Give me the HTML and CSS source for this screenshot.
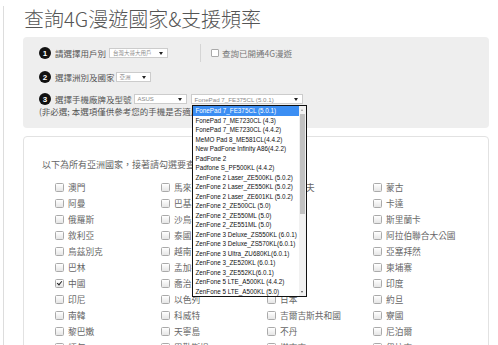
FILE: index.html
```html
<!DOCTYPE html>
<html lang="zh-Hant">
<head>
    <meta charset="UTF-8">
    <title>查詢4G漫遊國家&amp;支援頻率</title>
    <link rel="stylesheet" href="styles.css">
</head>
<body>
<div class="page">
    <h1>查詢4G漫遊國家&amp;支援頻率</h1>

    <div class="filters">
        <div class="row">
            <span class="num">1</span>
            <span class="label">請選擇用戶別</span>
            <span class="select sel-user">台灣大哥大用戶<i class="caret"></i></span>
            <span class="divider"></span>
            <span class="box"></span>
            <span class="label light">查詢已開通4G漫遊</span>
        </div>
        <div class="row row-2">
            <span class="num">2</span>
            <span class="label">選擇洲別及國家</span>
            <span class="select sel-area">亞洲<i class="caret"></i></span>
        </div>
        <div class="row row-3">
            <span class="num">3</span>
            <span class="label">選擇手機廠牌及型號</span>
            <span class="select sel-brand">ASUS<i class="caret"></i></span>
            <span class="select sel-model">FonePad 7_FE375CL (5.0.1)<i class="caret"></i>
                <!-- open dropdown of the model select -->
                <span class="options">
                    <span class="opt-list">
                        <span class="opt selected">FonePad 7_FE375CL (5.0.1)</span>
                        <span class="opt">FonePad 7_ME7230CL (4.3)</span>
                        <span class="opt">FonePad 7_ME7230CL (4.4.2)</span>
                        <span class="opt">MeMO Pad 8_ME581CL(4.4.2)</span>
                        <span class="opt">New PadFone Infinity A86(4.2.2)</span>
                        <span class="opt">PadFone 2</span>
                        <span class="opt">Padfone S_PF500KL (4.4.2)</span>
                        <span class="opt">ZenFone 2 Laser_ZE500KL (5.0.2)</span>
                        <span class="opt">ZenFone 2 Laser_ZE550KL (5.0.2)</span>
                        <span class="opt">ZenFone 2 Laser_ZE601KL (5.0.2)</span>
                        <span class="opt">ZenFone 2_ZE500CL (5.0)</span>
                        <span class="opt">ZenFone 2_ZE550ML (5.0)</span>
                        <span class="opt">ZenFone 2_ZE551ML (5.0)</span>
                        <span class="opt">ZenFone 3 Deluxe_ZS550KL (6.0.1)</span>
                        <span class="opt">ZenFone 3 Deluxe_ZS570KL(6.0.1)</span>
                        <span class="opt">ZenFone 3 Ultra_ZU680KL(6.0.1)</span>
                        <span class="opt">ZenFone 3_ZE520KL (6.0.1)</span>
                        <span class="opt">ZenFone 3_ZE552KL(6.0.1)</span>
                        <span class="opt">ZenFone 5 LTE_A500KL (4.4.2)</span>
                        <span class="opt">ZenFone 5 LTE_A500KL (5.0)</span>
                    </span>
                    <span class="scroll">
                        <span class="arrow up"></span>
                        <span class="thumb"></span>
                        <span class="arrow down"></span>
                    </span>
                </span>
            </span>
        </div>
        <div class="note">(非必選; 本選項僅供參考您的手機是否適用當地4G頻段)</div>
    </div>

    <div class="results">
        <p class="intro">以下為所有亞洲國家，接著請勾選要查詢的國家</p>
        <div class="countries">
            <label class="item"><span class="check"></span>澳門</label>
            <label class="item"><span class="check"></span>阿曼</label>
            <label class="item"><span class="check"></span>俄羅斯</label>
            <label class="item"><span class="check"></span>敘利亞</label>
            <label class="item"><span class="check"></span>烏茲別克</label>
            <label class="item"><span class="check"></span>巴林</label>
            <label class="item"><span class="check on"></span>中國</label>
            <label class="item"><span class="check"></span>印尼</label>
            <label class="item"><span class="check"></span>南韓</label>
            <label class="item"><span class="check"></span>黎巴嫩</label>
            <label class="item"><span class="check"></span>緬甸</label>

            <label class="item"><span class="check"></span>馬來西亞</label>
            <label class="item"><span class="check"></span>巴基斯坦</label>
            <label class="item"><span class="check"></span>沙烏地阿拉伯</label>
            <label class="item"><span class="check"></span>泰國</label>
            <label class="item"><span class="check"></span>越南</label>
            <label class="item"><span class="check"></span>孟加拉</label>
            <label class="item"><span class="check"></span>喬治亞</label>
            <label class="item"><span class="check"></span>以色列</label>
            <label class="item"><span class="check"></span>科威特</label>
            <label class="item"><span class="check"></span>天寧島</label>
            <label class="item"><span class="check"></span>巴勒斯坦</label>

            <label class="item"><span class="check"></span>馬爾地夫</label>
            <label class="item"><span class="check"></span>新加坡</label>
            <label class="item"><span class="check"></span>菲律賓</label>
            <label class="item"><span class="check"></span>土耳其</label>
            <label class="item"><span class="check"></span>哈薩克</label>
            <label class="item"><span class="check"></span>汶萊</label>
            <label class="item"><span class="check"></span>香港</label>
            <label class="item"><span class="check"></span>日本</label>
            <label class="item"><span class="check"></span>吉爾吉斯共和國</label>
            <label class="item"><span class="check"></span>不丹</label>
            <label class="item"><span class="check"></span>塔吉克</label>

            <label class="item"><span class="check"></span>蒙古</label>
            <label class="item"><span class="check"></span>卡達</label>
            <label class="item"><span class="check"></span>斯里蘭卡</label>
            <label class="item"><span class="check"></span>阿拉伯聯合大公國</label>
            <label class="item"><span class="check"></span>亞塞拜然</label>
            <label class="item"><span class="check"></span>柬埔寨</label>
            <label class="item"><span class="check"></span>印度</label>
            <label class="item"><span class="check"></span>約旦</label>
            <label class="item"><span class="check"></span>寮國</label>
            <label class="item"><span class="check"></span>尼泊爾</label>
            <label class="item"><span class="check"></span>伊拉克</label>
        </div>
    </div>
</div>
</body>
</html>
```

FILE: styles.css
```css
html, body {
    overflow: hidden;
}

body {
    margin: 0;
    background-color: #fff;
    font-family: "Liberation Sans", "Noto Sans CJK TC", sans-serif;
    color: #555;
}

.page {
    margin-left: 3px;
    border-left: 1px solid #ddd;
    min-height: 400px;
}

h1 {
    margin: 6px 0 5px 20px;
    font-family: "Noto Sans CJK TC", sans-serif;
    font-size: 20px;
    line-height: 26px;
    font-weight: 300;
    color: #555;
}

/* top filter panel */
.filters {
    margin-left: 19px;
    width: 466px;
    box-sizing: border-box;
    padding: 10px 16px 11px;
    background-color: #eee;
    border-radius: 4px;
}

.row {
    display: flex;
    align-items: center;
    height: 12px;
}

.row-2 {
    margin-top: 12px;
}

.row-3 {
    margin-top: 10px;
}

.num {
    display: flex;
    align-items: center;
    justify-content: center;
    width: 12px;
    height: 12px;
    margin-right: 4px;
    border-radius: 50%;
    background-color: #111;
    color: #fff;
    font-size: 8px;
    font-weight: bold;
}

.label {
    font-family: "Noto Sans CJK TC", sans-serif;
    font-size: 8.5px;
    line-height: 12px;
    color: #555;
    white-space: nowrap;
}

.label.light {
    color: #777;
}

.select {
    display: flex;
    align-items: center;
    justify-content: space-between;
    height: 10px;
    box-sizing: border-box;
    margin-left: 3px;
    padding: 0 4px 0 3px;
    border: 1px solid #ccc;
    background-color: #fff;
    font-size: 5.5px;
    color: #888;
    white-space: nowrap;
}

.caret {
    width: 0;
    height: 0;
    border-left: 2.5px solid transparent;
    border-right: 2.5px solid transparent;
    border-top: 3.5px solid #222;
}

.sel-user {
    width: 59px;
}

.sel-area {
    width: 35px;
    margin-left: 1px;
}

.sel-brand {
    width: 53px;
    margin-left: 2px;
    font-size: 6px;
}

.sel-model {
    position: relative;
    width: 112px;
    margin-left: 4px;
    font-size: 6.2px;
}

.divider {
    width: 1px;
    height: 18px;
    margin-left: 32px;
    background-color: #d5d5d5;
}

.box {
    width: 8px;
    height: 8px;
    box-sizing: border-box;
    margin: 0 3px 0 10px;
    border: 1px solid #aaa;
    border-radius: 1px;
    background-color: #fff;
}

.note {
    font-family: "Noto Sans CJK TC", sans-serif;
    font-size: 8.5px;
    line-height: 12px;
    color: #555;
    white-space: nowrap;
}

/* open select list */
.options {
    position: absolute;
    top: 10px;
    left: 0;
    z-index: 5;
    display: flex;
    width: 115px;
    height: 192px;
    box-sizing: border-box;
    border: 1px solid #111;
    background-color: #fff;
}

.opt-list {
    display: flex;
    flex-direction: column;
    flex: 1;
}

.opt {
    display: block;
    padding-left: 3px;
    font-family: "Liberation Sans", sans-serif;
    font-size: 6.3px;
    line-height: 9.5px;
    color: #111;
}

.opt.selected {
    background-color: #3b8ef3;
    color: #fff;
}

.scroll {
    position: relative;
    width: 7px;
    background-color: #f1f1f1;
}

.thumb {
    position: absolute;
    top: 8px;
    left: 1px;
    right: 1px;
    height: 100px;
    background-color: #c1c1c1;
}

.arrow {
    position: absolute;
    left: 2px;
    width: 0;
    height: 0;
    border-left: 1.5px solid transparent;
    border-right: 1.5px solid transparent;
}

.arrow.up {
    top: 3px;
    border-bottom: 2px solid #999;
}

.arrow.down {
    bottom: 3px;
    border-top: 2px solid #555;
}

/* country list */
.results {
    margin: 8px 0 0 19px;
    width: 466px;
    height: 240px;
    box-sizing: border-box;
    padding: 21px 18px 0;
    border: 1px solid #e2e2e2;
    border-radius: 4px;
}

.intro {
    margin: 0 0 7px;
    font-family: "Noto Sans CJK TC", sans-serif;
    font-size: 9px;
    line-height: 14px;
    color: #666;
    white-space: nowrap;
}

.countries {
    display: grid;
    grid-template-columns: repeat(4, 106px);
    grid-template-rows: repeat(11, 16px);
    grid-auto-flow: column;
    margin-left: 13px;
}

.item {
    display: flex;
    align-items: center;
    font-family: "Noto Sans CJK TC", sans-serif;
    font-size: 8.7px;
    color: #666;
    white-space: nowrap;
}

.check {
    position: relative;
    width: 7px;
    height: 7px;
    margin-right: 4px;
    border: 1px solid #aaa;
    border-radius: 1.5px;
    background: linear-gradient(#fff, #e6e6e6);
}

.check.on::after {
    content: "";
    position: absolute;
    left: 2px;
    top: 0;
    width: 2px;
    height: 4px;
    border-right: 1.5px solid #222;
    border-bottom: 1.5px solid #222;
    transform: rotate(40deg);
}
```
